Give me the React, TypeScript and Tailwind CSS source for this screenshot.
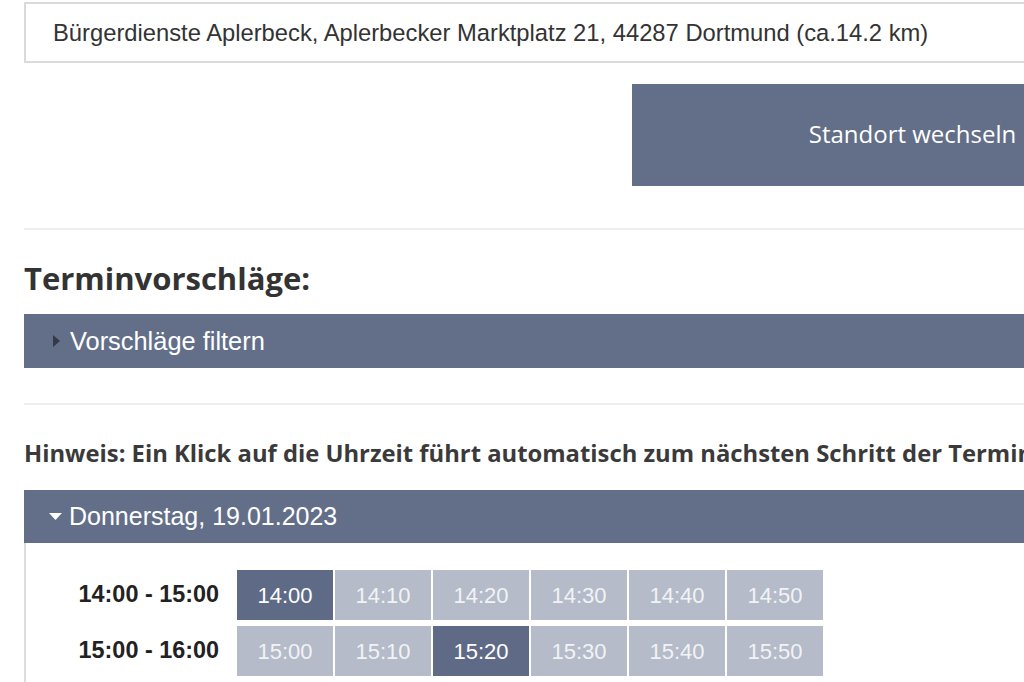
import React from "react";

// Terminvergabe – Standort und Terminvorschläge

const rows = [
  { label: "14:00 - 15:00", slots: ["14:00", "14:10", "14:20", "14:30", "14:40", "14:50"], active: "14:00" },
  { label: "15:00 - 16:00", slots: ["15:00", "15:10", "15:20", "15:30", "15:40", "15:50"], active: "15:20" }
];

const arial = "font-['Liberation_Sans',Arial,sans-serif]";
const openSans = "font-['Open_Sans','Noto_Sans',sans-serif]";

export default function App() {
  return (
    <div className="h-[682px] w-[1024px] overflow-hidden bg-white">
      <div className="w-[1240px] pl-[24px] pt-[2px]">
        <div className={`flex h-[61px] items-center border-2 border-[#dadada] bg-white pl-[27px] text-[23.75px] text-[#333] ${arial}`}>
          Bürgerdienste Aplerbeck, Aplerbecker Marktplatz 21, 44287 Dortmund (ca.14.2 km)
        </div>

        <div className="mt-[21px] pl-[608px]">
          <button
            type="button"
            className={`flex h-[102px] w-[561px] items-center justify-center pb-[2px] bg-[#636f89] text-[24px] text-white ${openSans}`}
          >
            Standort wechseln
          </button>
        </div>

        <div className="mt-[42px] h-[2px] bg-[#eeeeee]" />

        <h2 className={`mt-[30px] text-[31px] font-bold leading-[36px] text-[#333] ${openSans}`}>Terminvorschläge:</h2>

        <div className={`mt-[18px] flex h-[54px] items-center bg-[#636f89] pl-[29px] text-[25.4px] text-white ${arial}`}>
          <svg width="7" height="12" viewBox="0 0 7 12" className="mr-[10px]">
            <path d="M0 0 L7 6 L0 12 Z" fill="#333a48" />
          </svg>
          Vorschläge filtern
        </div>

        <div className="mt-[35px] h-[2px] bg-[#eeeeee]" />

        <p className={`mt-[32px] whitespace-nowrap text-[23.8px] font-bold leading-[32px] text-[#3a3a3a] ${openSans}`}>
          Hinweis: Ein Klick auf die Uhrzeit führt automatisch zum nächsten Schritt der Terminvereinbarung.
        </p>

        <div className={`mt-[21px] flex h-[53px] items-center bg-[#636f89] pl-[25px] text-[25px] text-white ${arial}`}>
          <svg width="13" height="7" viewBox="0 0 13 7" className="mr-[7px]">
            <path d="M0 0 L13 0 L6.5 7 Z" fill="#ffffff" />
          </svg>
          Donnerstag, 19.01.2023
        </div>

        <div className="border-l-2 border-[#dddddd] pt-[27px] pb-[20px]">
          <div className="flex flex-col gap-[6px]">
            {rows.map((row) => (
              <div key={row.label} className="flex items-center">
                <div className={`w-[211px] pr-[18px] text-right text-[23.4px] font-bold text-[#222] ${arial}`}>{row.label}</div>
                <div className="flex gap-[2px]">
                  {row.slots.map((slot) => (
                    <button
                      key={slot}
                      type="button"
                      className={`flex h-[50px] w-[96px] items-center justify-center text-[22px] ${arial} ${
                        slot === row.active ? "bg-[#5f6b86] text-white" : "bg-[#b5bbc8] text-[#f1f3f6]"
                      }`}
                    >
                      {slot}
                    </button>
                  ))}
                </div>
              </div>
            ))}
          </div>
        </div>
      </div>
    </div>
  );
}
